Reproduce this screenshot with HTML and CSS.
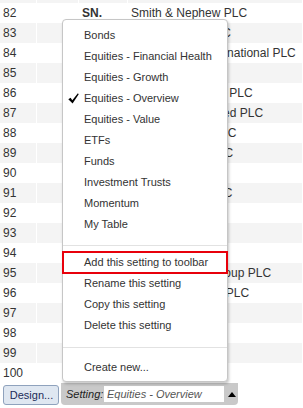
FILE: index.html
```html
<!DOCTYPE html>
<html lang="en">
<head>
    <meta charset="UTF-8">
    <title>Setting menu</title>
    <link rel="stylesheet" href="styles.css">
</head>
<body>
    <div class="page">
        <!-- Results grid (scrolled down) -->
        <div class="grid-view">
            <table class="grid">
                <tbody>
                    <tr><td>81</td><td></td><td>SMDS</td><td>DS Smith PLC</td></tr>
                    <tr><td>82</td><td></td><td class="ticker">SN.</td><td>Smith &amp; Nephew PLC</td></tr>
                    <tr><td>83</td><td></td><td>SMIN</td><td>Smiths Group PLC</td></tr>
                    <tr><td>84</td><td></td><td>SPX</td><td>Spirax Sarco International PLC</td></tr>
                    <tr><td>85</td><td></td><td>SSE</td><td>SSE PLC</td></tr>
                    <tr><td>86</td><td></td><td>STJ</td><td>St. James's Place PLC</td></tr>
                    <tr><td>87</td><td></td><td>STAN</td><td>Standard Chartered PLC</td></tr>
                    <tr><td>88</td><td></td><td>TW.</td><td>Taylor Wimpey PLC</td></tr>
                    <tr><td>89</td><td></td><td>TPK</td><td>Travis Perkins PLC</td></tr>
                    <tr><td>90</td><td></td><td>TUI</td><td>TUI AG</td></tr>
                    <tr><td>91</td><td></td><td>RTO</td><td>Rentokil Initial PLC</td></tr>
                    <tr><td>92</td><td></td><td>TSCO</td><td>Tesco PLC</td></tr>
                    <tr><td>93</td><td></td><td>ULVR</td><td>Unilever PLC</td></tr>
                    <tr><td>94</td><td></td><td>UTG</td><td>Unite PLC</td></tr>
                    <tr><td>95</td><td></td><td>UU.</td><td>United Utilities Group PLC</td></tr>
                    <tr><td>96</td><td></td><td>WTB</td><td>Whitbread Group PLC</td></tr>
                    <tr><td>97</td><td></td><td>VOD</td><td>Vodafone PLC</td></tr>
                    <tr><td>98</td><td></td><td>WPP</td><td>WPP PLC</td></tr>
                    <tr><td>99</td><td></td><td>III</td><td>3i Group PLC</td></tr>
                    <tr><td>100</td><td></td><td>WG.</td><td>Wood Group</td></tr>
                </tbody>
            </table>
        </div>

        <!-- Toolbar -->
        <div class="toolbar">
            <button class="design-btn">Design...</button>
            <div class="setting-box">
                <span class="setting-label">Setting:</span>
                <span class="setting-value">Equities - Overview</span>
                <span class="setting-arrow"></span>
            </div>
        </div>

        <!-- Settings popup menu -->
        <div class="menu">
            <div class="menu-item">Bonds</div>
            <div class="menu-item">Equities - Financial Health</div>
            <div class="menu-item">Equities - Growth</div>
            <div class="menu-item checked">
                <svg class="check" width="11" height="11" viewBox="0 0 11 11"><path d="M0.3 6.2 L2.6 4.8 L4.3 7.3 L9.9 0.3 L10.7 1.2 L4.6 10.6 Z" fill="#000"/></svg>
                Equities - Overview
            </div>
            <div class="menu-item">Equities - Value</div>
            <div class="menu-item">ETFs</div>
            <div class="menu-item">Funds</div>
            <div class="menu-item">Investment Trusts</div>
            <div class="menu-item">Momentum</div>
            <div class="menu-item">My Table</div>
            <div class="menu-sep first-sep"></div>
            <div class="menu-item highlight">Add this setting to toolbar</div>
            <div class="menu-item">Rename this setting</div>
            <div class="menu-item">Copy this setting</div>
            <div class="menu-item">Delete this setting</div>
            <div class="menu-sep second-sep"></div>
            <div class="menu-item">Create new...</div>
        </div>
    </div>
</body>
</html>
```

FILE: styles.css
```css
/* Grid + settings menu */
body {
    margin: 0;
    font-family: 'Liberation Sans', Arial, sans-serif;
    color: #333;
    background: #fff;
}

.page {
    position: relative;
    width: 303px;
    height: 408px;
    overflow: hidden;
}

.grid-view {
    height: 383px;
    overflow: hidden;
}

.grid {
    width: 100%;
    margin-top: -17px;
    border-collapse: collapse;
    table-layout: fixed;
    font-size: 12px;
}

.grid td {
    height: 20px;
    padding: 0 0 0 3px;
    border-right: 1px solid #fff;
    white-space: nowrap;
    overflow: hidden;
    line-height: 20px;
}

.grid td:nth-child(1) { width: 33px; }
.grid td:nth-child(2) { width: 38px; }
.grid td:nth-child(3) { width: 45px; }

.grid tr:nth-child(odd) {
    background: #f4f4f4;
}

.grid .ticker {
    font-weight: bold;
}

/* Toolbar */
.toolbar {
    display: flex;
    align-items: flex-start;
    height: 25px;
    padding-left: 3px;
    font-size: 11px;
}

.design-btn {
    margin-top: 2px;
    width: 56px;
    height: 20px;
    padding: 0 0 0 1px;
    font-family: 'Liberation Sans', Arial, sans-serif;
    font-size: 11px;
    color: #1c2b58;
    background: #dfe7f1;
    border: 1px solid #8fa2bd;
    border-radius: 3px;
}

.setting-box {
    display: flex;
    align-items: center;
    margin-left: 2px;
    width: 177px;
    height: 22px;
    background: #c9c9c9;
    border-radius: 0 0 4px 4px;
    font-style: italic;
}

.setting-label {
    padding-left: 5px;
    width: 38px;
    color: #222;
}

.setting-value {
    width: 117px;
    height: 16px;
    padding-left: 3px;
    line-height: 16px;
    color: #555;
    background: #fff;
}

.setting-arrow {
    margin-left: 4px;
    width: 0;
    height: 0;
    border-left: 4px solid transparent;
    border-right: 4px solid transparent;
    border-bottom: 5px solid #000;
}

/* Popup menu */
.menu {
    position: absolute;
    left: 62px;
    top: 19px;
    width: 164px;
    padding: 5px 0 3px;
    background: #fff;
    border: 1px solid #c6c6c6;
    border-radius: 4px;
    box-shadow: 1px 2px 3px rgba(0, 0, 0, 0.22);
    font-size: 11px;
}

.menu-item {
    position: relative;
    height: 21px;
    line-height: 21px;
    padding-left: 21px;
    color: #333;
    white-space: nowrap;
}

.menu-item .check {
    position: absolute;
    left: 5px;
    top: 5px;
}

.menu-item.highlight {
    outline: 2px solid #e8000b;
    outline-offset: -1px;
}

.menu-sep {
    height: 1px;
    background: #e2e2e2;
}

.first-sep {
    margin: 10px 0 6px;
}

.second-sep {
    margin: 11px 0 9px;
}
```
